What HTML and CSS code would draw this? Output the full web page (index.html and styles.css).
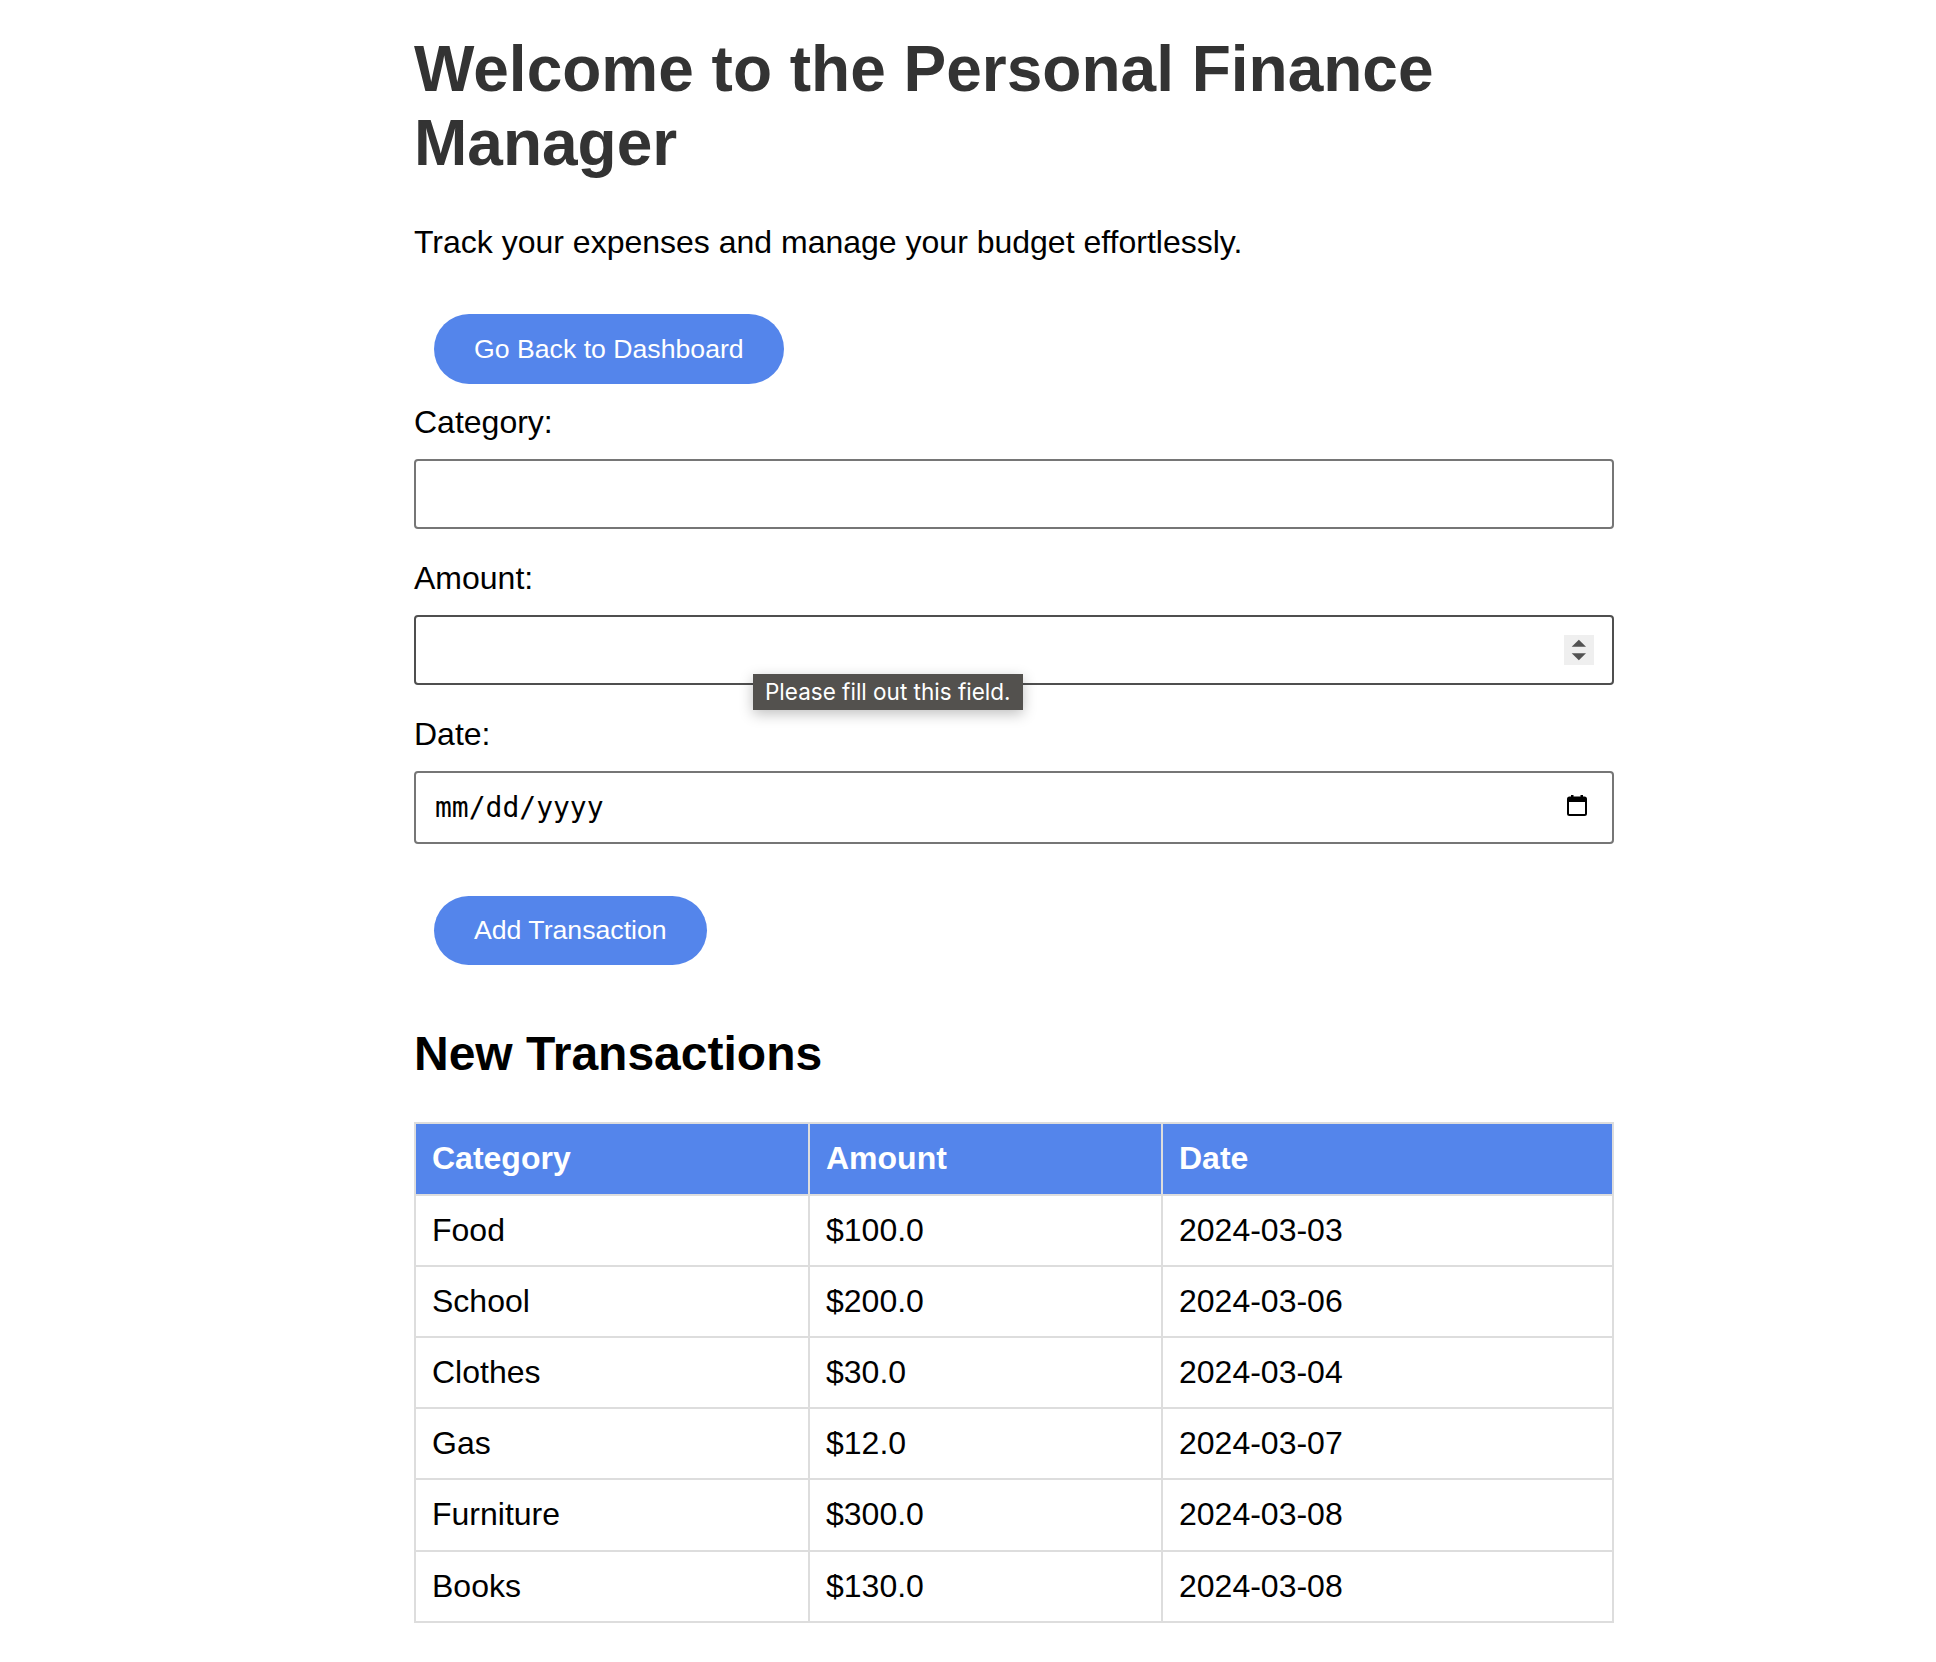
FILE: index.html
```html
<!DOCTYPE html>
<html lang="en">
<head>
<meta charset="utf-8">
<title>Personal Finance Manager</title>
<link rel="stylesheet" href="styles.css">
</head>
<body>
<main class="page">
  <h1 class="title">Welcome to the Personal Finance Manager</h1>
  <p class="lead">Track your expenses and manage your budget effortlessly.</p>
  <div class="actions">
    <button class="btn" type="button">Go Back to Dashboard</button>
  </div>
  <form class="form">
    <label class="label" for="category">Category:</label>
    <div class="field">
      <input class="field-input" id="category" type="text">
    </div>
    <label class="label" for="amount">Amount:</label>
    <div class="field field-focus">
      <input class="field-input" id="amount" type="text">
      <span class="spinner">
        <svg width="30" height="30" viewBox="0 0 30 30"><path d="M7.7 11.7 L22 11.7 L14.85 4.8 Z" fill="#525252"/><path d="M7.7 18.3 L22 18.3 L14.85 25.2 Z" fill="#525252"/></svg>
      </span>
      <div class="tooltip">Please fill out this field.</div>
    </div>
    <label class="label" for="date">Date:</label>
    <div class="field field-date">
      <span class="date-text" id="date">mm/dd/yyyy</span>
      <svg class="cal-icon" width="20" height="22" viewBox="0 0 20 22"><rect x="1" y="3.5" width="18" height="17.5" rx="1.5" fill="none" stroke="#000" stroke-width="2"/><rect x="1" y="3.5" width="18" height="4.5" fill="#000"/><rect x="4" y="1" width="2.5" height="3.5" fill="#000"/><rect x="13.5" y="1" width="2.5" height="3.5" fill="#000"/></svg>
    </div>
    <div class="actions">
      <button class="btn" type="button">Add Transaction</button>
    </div>
  </form>
  <h2 class="section-title">New Transactions</h2>
  <table class="table">
    <colgroup>
      <col class="col-cat">
      <col class="col-amt">
      <col class="col-date">
    </colgroup>
    <thead>
      <tr><th>Category</th><th>Amount</th><th>Date</th></tr>
    </thead>
    <tbody>
      <tr><td>Food</td><td>$100.0</td><td>2024-03-03</td></tr>
      <tr><td>School</td><td>$200.0</td><td>2024-03-06</td></tr>
      <tr><td>Clothes</td><td>$30.0</td><td>2024-03-04</td></tr>
      <tr><td>Gas</td><td>$12.0</td><td>2024-03-07</td></tr>
      <tr><td>Furniture</td><td>$300.0</td><td>2024-03-08</td></tr>
      <tr><td>Books</td><td>$130.0</td><td>2024-03-08</td></tr>
    </tbody>
  </table>
</main>
</body>
</html>
```

FILE: styles.css
```css
html, body {
  margin: 0;
  padding: 0;
  background: #fff;
}

body {
  font-family: "Liberation Sans", Arial, Helvetica, sans-serif;
  font-size: 32px;
  color: #000;
}

.page {
  width: 1200px;
  margin-left: 414px;
  padding-top: 33px;
  padding-bottom: 40px;
}

.title {
  margin: 0 0 44px 0;
  font-size: 64px;
  font-weight: bold;
  color: #333;
  line-height: 1.15;
}

.lead {
  margin: 0 0 33.5px 0;
  line-height: 1.15;
}

.actions {
  display: block;
}

.btn {
  display: inline-block;
  margin: 20px;
  padding: 19.5px 40px;
  border: none;
  border-radius: 50px;
  background: #5485eb;
  color: #fff;
  font-family: "Liberation Sans", Arial, Helvetica, sans-serif;
  font-size: 26.67px;
  line-height: 1.15;
  cursor: pointer;
}

.form {
  margin: 0;
}

.label {
  display: block;
  line-height: 1.15;
  margin-bottom: 18px;
}

.field {
  position: relative;
  display: flex;
  align-items: center;
  box-sizing: border-box;
  width: 1200px;
  height: 70px;
  margin-bottom: 31px;
  border: 2px solid #767676;
  border-radius: 4px;
  background: #fff;
}

.field-focus {
  border-color: #4f4f4f;
}

.field-input {
  flex: 1;
  min-width: 0;
  height: 100%;
  border: none;
  outline: none;
  background: transparent;
  padding: 0 18px;
  font-family: "Liberation Sans", Arial, sans-serif;
  font-size: 28px;
}

.spinner {
  display: flex;
  width: 30px;
  height: 30px;
  margin-right: 18px;
  background: #efefef;
}

.tooltip {
  position: absolute;
  left: 337px;
  top: 57px;
  padding: 0 12px;
  height: 36px;
  line-height: 36px;
  background: #53514e;
  color: #fff;
  font-family: Inter, "Noto Sans", sans-serif;
  font-size: 22.5px;
  white-space: nowrap;
  box-shadow: 0 4px 14px rgba(0, 0, 0, 0.25);
  z-index: 2;
}

.field-date {
  height: 73px;
  justify-content: space-between;
  padding: 0 25px 0 19px;
  margin-bottom: 32px;
}

.date-text {
  font-family: "DejaVu Sans Mono", "Liberation Mono", monospace;
  font-size: 28px;
  color: #000;
}

.cal-icon {
  display: block;
  margin-top: -4px;
}

.section-title {
  margin: 41px 0 41px 0;
  font-size: 48px;
  font-weight: bold;
  line-height: 1.15;
}

.table {
  width: 1198px;
  border-collapse: collapse;
  table-layout: fixed;
}

.col-cat { width: 394px; }
.col-amt { width: 353px; }
.col-date { width: 451px; }

.table th,
.table td {
  border: 2px solid #ddd;
  padding: 16px;
  text-align: left;
  line-height: 37.2px;
  font-size: 32px;
}

.table th {
  background: #5485eb;
  color: #fff;
  font-weight: bold;
}
```
